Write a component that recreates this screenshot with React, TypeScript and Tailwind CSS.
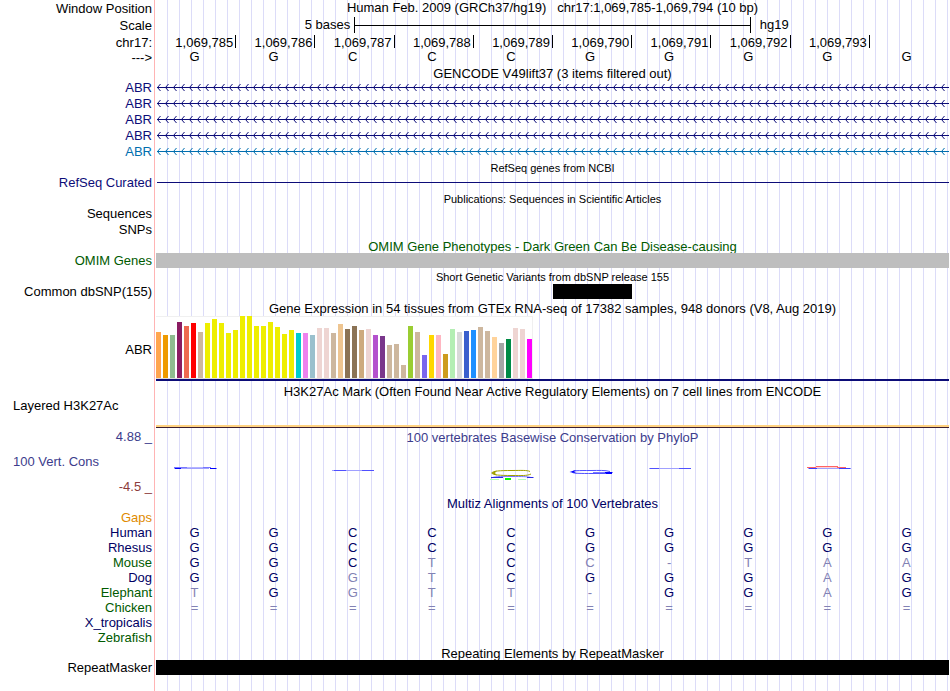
import type { ReactNode } from "react";
import clsx from "clsx";

const positions = [
  "1,069,785",
  "1,069,786",
  "1,069,787",
  "1,069,788",
  "1,069,789",
  "1,069,790",
  "1,069,791",
  "1,069,792",
  "1,069,793",
];

const reference = "GGCCCGGGGG";

const transcripts = [
  { id: 1, color: "text-[#0c0c78]" },
  { id: 2, color: "text-[#0c0c78]" },
  { id: 3, color: "text-[#0c0c78]" },
  { id: 4, color: "text-[#0c0c78]" },
  { id: 5, color: "text-[#006eaf]" },
];

const species = [
  { name: "Gaps", bases: "", color: "text-[#e08a00]" },
  { name: "Human", bases: "GGCCCGGGGG", color: "text-[#000064]" },
  { name: "Rhesus", bases: "GGCCCGGGGG", color: "text-[#000064]" },
  { name: "Mouse", bases: "GGCTCC-TAA", color: "text-[#005a00]" },
  { name: "Dog", bases: "GGGTCGGGAG", color: "text-[#000064]" },
  { name: "Elephant", bases: "TGGTT-GGAG", color: "text-[#005a00]" },
  { name: "Chicken", bases: "==========", color: "text-[#005a00]" },
  { name: "X_tropicalis", bases: "", color: "text-[#000064]" },
  { name: "Zebrafish", bases: "", color: "text-[#005a00]" },
];

// GTEx tissues, in track order: [height in px, tissue color]
const tissues: [number, string][] = [
  [46, "#ffa54f"], [43, "#ee9a00"], [43, "#8fbc8f"], [56, "#8b1c62"], [52, "#ee6a50"], [55, "#ff0000"],
  [46, "#cdb79e"], [55, "#eeee00"], [59, "#eeee00"], [55, "#eeee00"], [45, "#eeee00"], [48, "#eeee00"],
  [62, "#eeee00"], [62, "#eeee00"], [52, "#eeee00"], [52, "#eeee00"], [56, "#eeee00"], [51, "#eeee00"],
  [44, "#eeee00"], [48, "#eeee00"], [45, "#00cdcd"], [45, "#ee82ee"], [43, "#9ac0cd"], [50, "#eed5d2"],
  [50, "#eed5d2"], [45, "#cdb79e"], [54, "#eec591"], [49, "#8b7355"], [52, "#8b7355"], [48, "#cdaa7d"],
  [49, "#eed5d2"], [43, "#b452cd"], [42, "#7a378b"], [33, "#cdb79e"], [34, "#cdb79e"], [13, "#cdb79e"],
  [52, "#9acd32"], [46, "#cdb79e"], [23, "#7a67ee"], [43, "#ffd700"], [43, "#ffb6c1"], [24, "#cd9b1d"],
  [49, "#b4eeb4"], [46, "#d9d9d9"], [47, "#3a5fcd"], [48, "#1e90ff"], [51, "#cdb79e"], [47, "#cdb79e"],
  [41, "#ffd39b"], [35, "#a6a6a6"], [39, "#008b45"], [50, "#eed5d2"], [49, "#eed5d2"], [39, "#ff00ff"],
];

type RowProps = {
  label?: ReactNode;
  height: string;
  labelClass?: string;
  children?: ReactNode;
};

function Row({ label, height, labelClass, children }: RowProps) {
  return (
    <div className={clsx("flex", height)}>
      <div
        className={clsx(
          "mr-px w-[155px] shrink-0 border-r border-[#ffb4b4] pr-0.5 text-right whitespace-nowrap",
          labelClass
        )}
      >
        {label}
      </div>
      <div className="mr-px min-w-0 flex-1 bg-[linear-gradient(to_right,transparent_11px,#dcdcf8_11px)] bg-[length:12px_100%]">
        {children}
      </div>
    </div>
  );
}

function Title({ height, className, children }: { height: string; className?: string; children: ReactNode }) {
  return (
    <Row height={height}>
      <h2 className={clsx("flex h-full items-end justify-center whitespace-pre", className ?? "leading-[13px]")}>
        {children}
      </h2>
    </Row>
  );
}

function Bases({ bases }: { bases: string }) {
  return (
    <div className="-ml-px grid grid-cols-10 pr-[3px] text-center">
      {bases.split("").map((base, i) => (
        <span key={i} className={base === reference[i] ? undefined : "text-[#8282b4]"}>
          {base}
        </span>
      ))}
    </div>
  );
}

function Transcript({ id }: { id: number }) {
  return (
    <svg className="block h-4 w-full pl-px" aria-hidden="true">
      <defs>
        <pattern id={`strand-${id}`} width="8" height="16" patternUnits="userSpaceOnUse">
          <path d="M3.5 4 L0.5 7.5 L3.5 11" fill="none" stroke="currentColor" />
        </pattern>
      </defs>
      <rect width="100%" height="16" fill={`url(#strand-${id})`} />
      <rect y="7" width="100%" height="1" fill="currentColor" />
    </svg>
  );
}

function Logo({ column, children }: { column: string; children: ReactNode }) {
  return (
    <svg className={clsx("row-start-1 h-4 w-11 justify-self-center", column)} viewBox="0 0 44 16" fill="none">
      {children}
    </svg>
  );
}

function ConservationLogos() {
  return (
    <div className="-ml-px grid grid-cols-10 pt-5 pr-px">
      <Logo column="col-start-1">
        <path d="M1 2.5 H14 M30 2.5 H38" stroke="#7878ff" />
        <path d="M14 2.5 H30" stroke="#b4b4ff" />
        <path d="M1 3.5 H36" stroke="#a0a0ff" />
        <path d="M2 3.5 H8 M37 3.5 H43.5" stroke="#0000ff" />
      </Logo>
      <Logo column="col-start-3">
        <path d="M1 5.5 H43" stroke="#a0a0ff" />
        <path d="M3 5.5 H15 M31 5.5 H43" stroke="#5050ff" />
      </Logo>
      <Logo column="col-start-5">
        <path d="M40 6.5 C37 5 31 5.5 22 5.5 C10 5.5 2 6 2 8 C2 10 10 10.5 22 10.5 C31 10.5 37 11 41 9" stroke="#a0a000" />
        <path d="M1 8 L7 5.5 L5 8 L7 10.5 Z" fill="#a0a000" />
        <path d="M0 14.5 H9 M28 14.5 H36" stroke="#b4ffb4" />
        <path d="M1 13 C6 11 14 11.5 22 11.5 C32 11.5 37 11.5 41 12.5" stroke="#7878ff" />
        <path d="M1 12.5 H13 M37 12.5 H43.5" stroke="#2828e6" />
        <rect x="15" y="13" width="6" height="2" fill="#00ff00" />
      </Logo>
      <Logo column="col-start-6">
        <path d="M41 6.5 C36 5 30 5.5 22 5.5 C10 5.5 3 5.5 3 7 C3 8.5 12 8.5 24 8.5 H43" stroke="#5050ff" />
        <path d="M0.5 7 L7 5 L5 7 L8 8.5 Z" fill="#0000ff" />
        <path d="M24 7.5 H38" stroke="#7878ff" />
        <path d="M36 7.5 H43.5 M37 8.5 H43" stroke="#0000ff" />
      </Logo>
      <Logo column="col-start-7">
        <path d="M1 3.5 H43" stroke="#a0a0ff" />
        <path d="M2 3.5 H11 M31 3.5 H43" stroke="#5050ff" />
      </Logo>
      <Logo column="col-start-9">
        <path d="M0 2.5 H9 M30 2.5 H39" stroke="#ff6464" />
        <path d="M9 1.5 H31" stroke="#ff6464" />
        <path d="M9 2.5 H30" stroke="#ffd2d2" />
        <path d="M1 3.5 H43.5" stroke="#a0a0ff" />
        <path d="M2 3.5 H10 M32 3.5 H43.5" stroke="#3c3cff" />
      </Logo>
    </div>
  );
}

export default function App() {
  return (
    <main className="flex min-h-screen flex-col overflow-hidden bg-white font-['Liberation_Sans',Arial,sans-serif] text-[13px] leading-[15px] text-black">
      <Row height="h-[17px]" label="Window Position" labelClass="leading-[17px]">
        <h1 className="text-center whitespace-pre">
          {"Human Feb. 2009 (GRCh37/hg19)   chr17:1,069,785-1,069,794 (10 bp)"}
        </h1>
      </Row>
      <Row height="h-[17px]" label="Scale" labelClass="leading-[17px]">
        <div className="flex leading-[15px]">
          <span className="w-1/4 pr-1 text-right">5 bases</span>
          <div className="flex h-4 w-1/2 items-center border-x border-black">
            <div className="h-px w-full bg-black" />
          </div>
          <span className="pl-[9px]">hg19</span>
        </div>
      </Row>
      <Row height="h-[15px]" label="chr17:" labelClass="leading-[17px]">
        <div className="grid h-[14px] grid-cols-10 grid-rows-[13px] pt-px pl-px text-right leading-[15px]">
          {positions.map((position) => (
            <span key={position} className="border-r border-black pr-0.5">
              {position}
            </span>
          ))}
        </div>
      </Row>
      <Row height="h-[17px]" label="--->" labelClass="leading-[17px]">
        <Bases bases={reference} />
      </Row>

      <Title height="h-[14px]">GENCODE V49lift37 (3 items filtered out)</Title>
      {transcripts.map(({ id, color }) => (
        <div key={id} className={color}>
          <Row height="h-4" label="ABR" labelClass="leading-4">
            <Transcript id={id} />
          </Row>
        </div>
      ))}

      <Title height="h-[15px]" className="text-[11px] leading-[14px]">
        RefSeq genes from NCBI
      </Title>
      <Row height="h-[15px]" label="RefSeq Curated" labelClass="text-[#0c0c78]">
        <div className="flex h-full items-center pl-px">
          <div className="h-px w-full bg-[#0c0c78]" />
        </div>
      </Row>

      <Title height="h-4" className="text-[11px] leading-[14px]">
        Publications: Sequences in Scientific Articles
      </Title>
      <Row height="h-4" label="Sequences" labelClass="leading-4" />
      <Row height="h-4" label="SNPs" labelClass="leading-4" />

      <Title height="h-[15px]" className="leading-[13px] text-[#005a00]">
        OMIM Gene Phenotypes - Dark Green Can Be Disease-causing
      </Title>
      <Row height="h-[15px]" label="OMIM Genes" labelClass="text-[#005a00]">
        <div className="h-full bg-[#bebebe]" />
      </Row>

      <Title height="h-4" className="text-[11px] leading-[14px]">
        Short Genetic Variants from dbSNP release 155
      </Title>
      <Row height="h-[15px]" label="Common dbSNP(155)">
        <div className="grid h-full grid-cols-10 pl-px">
          <div className="col-start-6 bg-black" />
        </div>
      </Row>

      <Title height="h-[17px]" className="leading-[14px]">
        Gene Expression in 54 tissues from GTEx RNA-seq of 17382 samples, 948 donors (V8, Aug 2019)
      </Title>
      <Row height="h-[65px]" label="ABR" labelClass="leading-[67px]">
        <div className="h-full border-b-2 border-[#0c0c78]">
          <div className="flex h-[63px] w-[377px] items-end gap-0.5 border-t border-r border-b border-t-[#f0f0f0] border-r-[#f0f0f0] border-b-[#dcdcdc] bg-white">
            {tissues.map(([height, color], i) => (
              <div key={i} className="w-[5px] shrink-0" style={{ height, backgroundColor: color }} />
            ))}
          </div>
        </div>
      </Row>

      <Title height="h-[17px]">
        H3K27Ac Mark (Often Found Near Active Regulatory Elements) on 7 cell lines from ENCODE
      </Title>
      <Row height="h-[30px]" label={<div className="pl-[13px] text-left">Layered H3K27Ac</div>}>
        <div className="flex h-full flex-col justify-end">
          <div className="h-0.5 bg-[#ffd280]" />
          <div className="h-px bg-[#3c1e32]" />
        </div>
      </Row>

      <Row
        height="h-[66px]"
        label={
          <div className="flex flex-col gap-[10px] pt-px text-[#3c3c8c]">
            <div>4.88 _</div>
            <div className="pl-[13px] text-left">100 Vert. Cons</div>
            <div className="text-[#8c3c3c]">-4.5 _</div>
          </div>
        }
      >
        <h2 className="pt-0.5 text-center text-[#3c3c8c]">100 vertebrates Basewise Conservation by PhyloP</h2>
        <ConservationLogos />
      </Row>

      <Title height="h-4" className="leading-[13px] text-[#000064]">
        Multiz Alignments of 100 Vertebrates
      </Title>
      {species.map(({ name, bases, color }) => (
        <Row key={name} height="h-[15px]" label={name} labelClass={color}>
          <div className="text-[#000064]">
            <Bases bases={bases} />
          </div>
        </Row>
      ))}

      <Title height="h-[15px]">Repeating Elements by RepeatMasker</Title>
      <Row height="h-[15px]" label="RepeatMasker">
        <div className="h-full bg-black" />
      </Row>
      <Row height="min-h-4 flex-1" />
    </main>
  );
}
